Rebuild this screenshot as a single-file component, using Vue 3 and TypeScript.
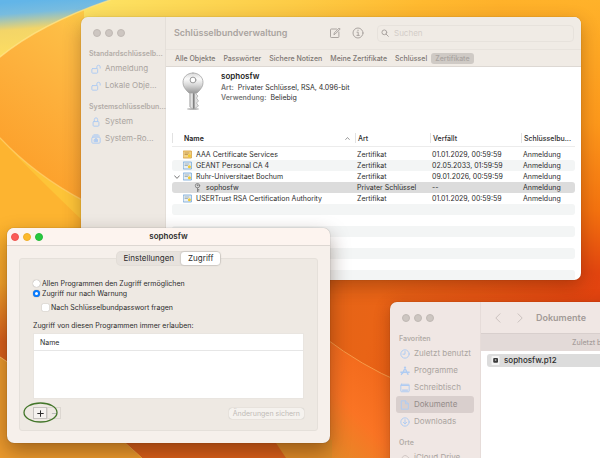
<script setup lang="ts">
interface Row { name: string; kind: string; expires: string; icon: 'root' | 'cert' | 'key'; open?: boolean; child?: boolean }

const categories = ['Alle Objekte', 'Passwörter', 'Sichere Notizen', 'Meine Zertifikate', 'Schlüssel', 'Zertifikate']
const rows: Row[] = [
  { name: 'AAA Certificate Services', kind: 'Zertifikat', expires: '01.01.2029, 00:59:59', icon: 'root' },
  { name: 'GEANT Personal CA 4', kind: 'Zertifikat', expires: '02.05.2033, 01:59:59', icon: 'cert' },
  { name: 'Ruhr-Universitaet Bochum', kind: 'Zertifikat', expires: '09.01.2026, 00:59:59', icon: 'cert', open: true },
  { name: 'sophosfw', kind: 'Privater Schlüssel', expires: '--', icon: 'key', child: true },
  { name: 'USERTrust RSA Certification Authority', kind: 'Zertifikat', expires: '01.01.2029, 00:59:59', icon: 'cert' },
]
const emptyRows = 7
const places = [
  { name: 'Zuletzt benutzt', icon: 'clock' },
  { name: 'Programme', icon: 'apps' },
  { name: 'Schreibtisch', icon: 'desk' },
  { name: 'Dokumente', icon: 'doc' },
  { name: 'Downloads', icon: 'down' },
]
</script>

<template>
  <main class="desktop">
    <svg class="wallpaper" viewBox="0 0 600 458" preserveAspectRatio="none" aria-hidden="true">
      <defs>
        <linearGradient id="base" x1="0.15" y1="0" x2="0.9" y2="0.7">
          <stop offset="0" stop-color="#fde364" /><stop offset=".25" stop-color="#fdcb45" /><stop offset=".4" stop-color="#ffb92f" /><stop offset=".75" stop-color="#fb9a1e" /><stop offset="1" stop-color="#f4720f" />
        </linearGradient>
        <linearGradient id="sky" x1="0.35" y1="0" x2="0.5" y2="1">
          <stop offset="0" stop-color="#62b5e8" /><stop offset=".2" stop-color="#78bcdf" /><stop offset=".48" stop-color="#f3d568" /><stop offset="1" stop-color="#ffdf60" />
        </linearGradient>
        <linearGradient id="petal" x1="0.9" y1="0" x2="0.5" y2="1">
          <stop offset="0" stop-color="#ffd448" /><stop offset=".25" stop-color="#fdbd45" /><stop offset=".55" stop-color="#fdb03c" /><stop offset="1" stop-color="#fc9f2a" />
        </linearGradient>
        <linearGradient id="low" x1="0" y1="0" x2="0" y2="1">
          <stop offset="0" stop-color="#fdb42e" /><stop offset=".25" stop-color="#f5a42a" /><stop offset=".5" stop-color="#d9601c" /><stop offset="1" stop-color="#d9601c" />
        </linearGradient>
        <linearGradient id="ember" x1="0" y1="0" x2="1" y2="0.1">
          <stop offset="0" stop-color="#d9641a" /><stop offset=".45" stop-color="#e96416" /><stop offset="1" stop-color="#e2430f" />
        </linearGradient>
        <linearGradient id="side" x1="0" y1="0" x2="0" y2="1">
          <stop offset="0" stop-color="#ffb22a" /><stop offset=".4" stop-color="#fd981b" /><stop offset=".68" stop-color="#f4720f" /><stop offset=".88" stop-color="#e2450f" />
        </linearGradient>
        <linearGradient id="flame" x1="0.6" y1="0.2" x2="0.1" y2="1">
          <stop offset="0" stop-color="#f26a1c" /><stop offset=".5" stop-color="#fa7424" /><stop offset="1" stop-color="#e58a28" />
        </linearGradient>
      </defs>
      <rect width="600" height="458" fill="url(#base)" />
      <path d="M0 0H110Q40 24 0 57Z" fill="url(#sky)" />
      <path d="M110 0Q40 24 0 57V138Q35 175 84 201V10Z" fill="url(#petal)" />
      <path d="M110 0Q40 24 0 57" fill="none" stroke="#ffe58a" stroke-width="1.5" opacity=".7" />
      <path d="M0 138Q35 175 84 201V230H0Z" fill="#fdc438" />
      <path d="M0 138Q35 175 84 201" fill="none" stroke="#ffcc66" stroke-width="1.5" opacity=".8" />
      <path d="M0 139Q40 180 84 222V280H0Z" fill="#fdb430" />
      <path d="M0 225H84V458H0Z" fill="url(#low)" />
      <path d="M500 0H600V310H500Z" fill="url(#side)" />
      <path d="M200 275H600V458H200Z" fill="url(#ember)" />
      <path d="M325 338Q362 366 400 382V458H325Z" fill="url(#flame)" />
      <path d="M325 338Q362 366 400 382" fill="none" stroke="#f79a48" />
      <path d="M0 357L130 446L140 458H0Z" fill="#eb9a2d" />
      <path d="M0 357L40 384" fill="none" stroke="#ffc066" />
      <path d="M122 440L142 458H290L272 430Z" fill="#d85f1a" />
      <path d="M274 440L286 458H332V440Z" fill="#dc8a28" />
      <path d="M122 440L142 458" fill="none" stroke="#eca448" />
    </svg>

    <section class="window keychain" aria-label="Schlüsselbundverwaltung">
      <aside class="side">
        <div class="lights"><i /><i /><i /></div>
        <h2>Standardschlüsselb...</h2>
        <a href="#">
          <svg viewBox="0 0 12 12"><rect x="1" y="5.5" width="7" height="5.5" rx="1" /><path d="M7 5.5V3.5a2 2 0 0 1 4 0V5" /></svg>Anmeldung
        </a>
        <a href="#">
          <svg viewBox="0 0 12 12"><rect x="1" y="5.5" width="7" height="5.5" rx="1" /><path d="M7 5.5V3.5a2 2 0 0 1 4 0V5" /></svg>Lokale Obje...
        </a>
        <h2 class="second">Systemschlüsselbun...</h2>
        <a href="#">
          <svg viewBox="0 0 12 12"><rect x="2.5" y="5.5" width="7" height="5.5" rx="1" /><path d="M4 5.5V3a2 2 0 0 1 4 0V5.5" /></svg>System
        </a>
        <a href="#">
          <svg viewBox="0 0 12 12"><rect x="1" y="3.8" width="10" height="7.2" rx="1.2" /><path d="M2 2.4h8M3.5 1h5" /><rect class="solid" x="4.2" y="6.8" width="3.6" height="2.4" /><path d="M4.9 6.5V5.8q1.1-1 2.2 0v.7" /></svg>System-Ro...
        </a>
      </aside>
      <div class="content">
        <header class="bar">
          <h1>Schlüsselbundverwaltung</h1>
          <button type="button" aria-label="Neu">
            <svg viewBox="0 0 12 12"><path d="M7.5 2H2.2Q1.5 2 1.5 2.7v7.1q0 .7.7.7h7q.7 0 .7-.7V5M5 7.3l.3-1.4L10.2 1l1 1-4.9 4.9z" /></svg>
          </button>
          <button type="button" aria-label="Information">
            <svg viewBox="0 0 12 12"><circle cx="6" cy="6" r="5" /><path d="M5 5.2h1.2v3M4.9 8.4h2.4M6 3.1v.6" /></svg>
          </button>
          <label class="search">
            <svg viewBox="0 0 12 12"><circle cx="5" cy="5" r="3.6" /><path d="M7.7 7.7l3.3 3.3" /></svg>
            <input type="search" placeholder="Suchen" aria-label="Suchen">
          </label>
        </header>
        <nav class="cats">
          <button v-for="c in categories" :key="c" type="button" :class="{ on: c === 'Zertifikate' }">{{ c }}</button>
        </nav>
        <div class="detail">
          <svg class="bigkey" viewBox="0 0 24 40" aria-hidden="true">
            <defs>
              <linearGradient id="metal" x1="0" y1="0" x2="0" y2="1"><stop offset="0" stop-color="#d8d8d8" /><stop offset=".3" stop-color="#fafafa" /><stop offset=".6" stop-color="#d8d8d8" /><stop offset="1" stop-color="#9a9a9a" /></linearGradient>
              <linearGradient id="stem" x1="0" y1="0" x2="1" y2="0"><stop offset="0" stop-color="#bbb" /><stop offset=".25" stop-color="#f2f2f2" /><stop offset=".45" stop-color="#666" /><stop offset=".6" stop-color="#ddd" /><stop offset="1" stop-color="#e6e6e6" /></linearGradient>
            </defs>
            <ellipse cx="12" cy="37" rx="6" ry="1" fill="#bbb" />
            <path d="M9 19h6v3l2 2-1.5 2 2 3-2 2 2 3-3 2-2.5 1L9 35Z" fill="url(#stem)" stroke="#999" stroke-width=".6" />
            <path d="M12 1c6 0 10 4.3 10 9.5 0 4-2 6-4 8.5l-2 2H8l-2-2C4 16.5 2 14.5 2 10.5 2 5.3 6 1 12 1Z" fill="url(#metal)" stroke="#a4a4a4" stroke-width=".8" />
            <circle cx="12" cy="8" r="2.9" fill="#fff" stroke="#999" />
          </svg>
          <div class="facts">
            <h3>sophosfw</h3>
            <p><b>Art:</b> Privater Schlüssel, RSA, 4.096-bit</p>
            <p><b>Verwendung:</b> Beliebig</p>
          </div>
        </div>
        <table class="certs">
          <colgroup><col><col class="c2"><col class="c3"><col class="c4"></colgroup>
          <thead>
            <tr>
              <th class="first"><div><span>Name</span><svg viewBox="0 0 6 6"><path d="M.8 4.2L3 1.8l2.2 2.4" /></svg></div></th>
              <th>Art</th><th>Verfällt</th><th>Schlüsselbu...</th>
            </tr>
          </thead>
          <tbody>
            <tr v-for="r in rows" :key="r.name" :class="{ sel: r.child }">
              <td>
                <span class="cell" :class="{ child: r.child }">
                  <svg class="twist" viewBox="0 0 6 6"><path v-if="r.open" d="M.6 1.8L3 4.4l2.4-2.6" /></svg>
                  <svg v-if="r.icon === 'key'" class="ic key" viewBox="0 0 9 9"><circle cx="4.5" cy="2.7" r="2.2" /><circle cx="4.5" cy="2.2" r=".4" /><path d="M4.5 4.9v3.7M4.8 6.5h1.1M4.8 7.9h1.1" /></svg>
                  <svg v-else class="ic" :class="r.icon" viewBox="0 0 9 9"><rect class="frame" x=".6" y="1" width="7.8" height="7" /><path d="M2 3h4M2 4.5h2.5" /><circle cx="6.4" cy="5.8" r="1.5" /></svg>
                  {{ r.name }}
                </span>
              </td>
              <td>{{ r.kind }}</td><td>{{ r.expires }}</td><td>Anmeldung</td>
            </tr>
            <tr v-for="n in emptyRows" :key="n"><td colspan="4" /></tr>
          </tbody>
        </table>
      </div>
    </section>

    <section class="window finder" aria-label="Dokumente">
      <aside class="side">
        <div class="lights"><i /><i /><i /></div>
        <h2>Favoriten</h2>
        <a v-for="p in places" :key="p.name" href="#" :class="{ on: p.icon === 'doc' }">
          <svg viewBox="0 0 12 12">
            <template v-if="p.icon === 'clock'"><circle cx="6" cy="6" r="5" /><path d="M6 3v3.2H3.5" /></template>
            <template v-else-if="p.icon === 'apps'"><path d="M6.6 1.5L3 8.8M5.4 1.5L9.6 10M1 7.5h10M2.3 9l-.6 1.2" class="thick" /></template>
            <template v-else-if="p.icon === 'desk'"><rect x="1" y="1.5" width="10" height="9" rx=".8" /><path d="M1.5 3h9" /><path d="M3 8.5h6" class="thick" /></template>
            <template v-else-if="p.icon === 'doc'"><path d="M2 1h4.5L10 4.5V11H2zM6.5 1v3.5H10" /></template>
            <template v-else><circle cx="6" cy="6" r="5" /><path d="M6 3.2v5M4 6.4l2 2 2-2" /></template>
          </svg>{{ p.name }}
        </a>
        <h2 class="second">Orte</h2>
        <a href="#" class="cloud"><svg viewBox="0 0 12 12"><path d="M3.2 10a2.3 2.3 0 0 1-.2-4.5 3.3 3.3 0 0 1 6.2-.6A2.6 2.6 0 0 1 9 10z" /></svg>iCloud Drive</a>
      </aside>
      <div class="content">
        <header class="bar">
          <button type="button" aria-label="Zurück"><svg viewBox="0 0 12 12"><path d="M8 1.8L3.8 6 8 10.2" /></svg></button>
          <button type="button" aria-label="Vorwärts"><svg viewBox="0 0 12 12"><path d="M4 1.8L8.2 6 4 10.2" /></svg></button>
          <h1>Dokumente</h1>
        </header>
        <div class="group">Zuletzt benutzt</div>
        <a href="#" class="file"><svg viewBox="0 0 9 9"><rect x=".5" y="0" width="8" height="9" rx="1" fill="#f4f4f4" /><rect x="2.2" y="2" width="4.8" height="4.8" rx="1" fill="#3a3a3a" /><circle cx="4.6" cy="4" r=".9" fill="#aaa" /></svg>sophosfw.p12</a>
      </div>
    </section>

    <section class="window dialog" aria-label="sophosfw">
      <header class="title"><div class="lights"><i class="r" /><i class="y" /><i class="g" /></div><h1>sophosfw</h1></header>
      <div class="body">
        <div class="tabs"><button type="button">Einstellungen</button><button type="button" class="on">Zugriff</button></div>
        <form class="panel" @submit.prevent>
          <label><input type="radio" name="access">Allen Programmen den Zugriff ermöglichen</label>
          <label><input type="radio" name="access" checked>Zugriff nur nach Warnung</label>
          <label class="sub"><input type="checkbox">Nach Schlüsselbundpasswort fragen</label>
          <p>Zugriff von diesen Programmen immer erlauben:</p>
          <div class="list"><div>Name</div></div>
          <div class="foot">
            <div class="pm">
              <button type="button" aria-label="Hinzufügen"><svg viewBox="0 0 8 8"><path d="M4 .8v6.4M.8 4h6.4" /></svg></button>
              <button type="button" aria-label="Entfernen" disabled><svg viewBox="0 0 8 8"><path d="M1.5 4h5" /></svg></button>
              <svg class="ring" viewBox="0 0 36 22" aria-hidden="true"><ellipse cx="17.5" cy="10.5" rx="16.5" ry="9.5" /></svg>
            </div>
            <button type="submit" class="save" disabled>Änderungen sichern</button>
          </div>
        </form>
      </div>
    </section>
  </main>
</template>

<style>
body { margin: 0; }
</style>

<style scoped>
.desktop { position: relative; min-height: 100vh; overflow: hidden; font: 7px/11px Inter, "Liberation Sans", sans-serif; color: #2c2c2c; }
.desktop * { box-sizing: border-box; }
.wallpaper { position: absolute; inset: 0; width: 100%; height: 100%; }
h1, h2, h3, p { margin: 0; }
button, input { font: inherit; color: inherit; border: 0; padding: 0; margin: 0; background: none; }
a { color: inherit; text-decoration: none; }
svg { fill: none; stroke: currentColor; stroke-linecap: round; stroke-linejoin: round; flex: none; display: block; }
.wallpaper, .bigkey { stroke: none; }
.window { position: absolute; display: flex; border-radius: 7px; overflow: hidden; white-space: nowrap; }
.lights { display: flex; gap: 4px; }
.lights i { width: 8px; height: 8px; border-radius: 50%; background: #cdc6c1; border: 1px solid #c0b9b4; }
.content { flex: 1; min-width: 0; background: #fff; }

.side { display: flex; flex-direction: column; color: #aaa4a0; font-size: 8px; flex: none; }
.side .lights { padding: 12px 0 0 12px; height: 31px; }
.side h2 { font-size: 7px; line-height: 12px; font-weight: 600; color: #b3ada8; }
.side .second { margin-top: 7px; }
.side a { display: flex; align-items: center; gap: 4px; height: 17px; border-radius: 3px; }
.side svg { width: 10px; height: 10px; color: #b0ccf2; stroke-width: 1.2; }
.side svg .solid { fill: currentColor; }
.side svg .thick { stroke-width: 1.6; }

.keychain { left: 81px; top: 17px; width: 500px; height: 263px; box-shadow: 0 6px 18px rgba(60, 20, 0, .3), 0 0 1px rgba(0, 0, 0, .4); }
.keychain .side { width: 85px; background: #eee9e3; border-right: 1px solid #e4dfd9; }
.keychain .side h2 { padding-left: 8px; }
.keychain .side a { padding-left: 10px; }
.bar { display: flex; align-items: center; }
.bar h1 { font-size: 9px; line-height: 14px; font-weight: 600; }
.keychain .bar { height: 32px; padding: 0 7px 0 8px; background: #f0ebe5; color: #aaa4a0; }
.keychain .bar h1 { flex: 1; }
.keychain .bar button { margin-right: 11px; }
.keychain .bar button:last-of-type { margin-right: 13px; }
.keychain .bar button svg { width: 12px; height: 12px; }
.search { display: flex; align-items: center; gap: 5px; width: 197px; height: 17px; padding: 0 3px; border: 1px solid #e7e2dc; border-radius: 4px; }
.search svg { width: 8px; height: 8px; stroke-width: 1.5; }
.search input { flex: 1; min-width: 0; font-size: 8px; outline: 0; }
.search input::placeholder { color: #d3cdc8; opacity: 1; }
.cats { display: flex; align-items: center; height: 18px; padding-left: 5px; background: #f0ebe5; border-top: 1px solid #e8e3dd; border-bottom: 1px solid #ddd8d3; color: #7d7773; font-weight: 500; }
.cats button { height: 11px; padding: 0 4px; border-radius: 3px; }
.cats .on { background: #cfcac5; color: #aaa5a1; }
.detail { display: flex; gap: 16px; height: 63px; padding: 3px 15px; }
.bigkey { width: 24px; height: 40px; margin-top: 2px; }
.facts h3 { font-size: 8px; line-height: 13px; font-weight: 600; color: #1c1c1c; }
.facts p { line-height: 10px; }
.facts b { font-weight: 600; color: #777; margin-right: 2px; }
.certs { width: calc(100% - 12px); margin-left: 6px; table-layout: fixed; border-collapse: separate; border-spacing: 0; }
.certs th, .certs td { padding: 0; height: 11px; text-align: left; font-weight: 400; }
.c2 { width: 75px; }
.c3 { width: 91px; }
.c4 { width: 54px; }
.certs th { height: 17px; font-weight: 500; padding-left: 3px; border-bottom: 1px solid #ececec; background: linear-gradient(#e2e2e2, #e2e2e2) 0 3px / 1px 10px no-repeat; }
.certs th.first { padding: 0 5px 0 12px; font-weight: 600; color: #1c1c1c; }
.first div { display: flex; align-items: center; justify-content: space-between; }
.certs th svg { width: 5px; height: 5px; color: #888; }
.certs td { padding-left: 2px; }
.certs td:first-child { border-radius: 3px 0 0 3px; }
.certs td:last-child { border-radius: 0 3px 3px 0; }
.certs td:only-child { border-radius: 3px; }
.certs tbody::before { content: ""; display: block; height: 2px; }
.certs tbody tr:nth-child(even) td { background: #f3f5f5; }
.certs tbody tr.sel td { background: #dcdcdc; }
.cell { display: flex; align-items: center; gap: 3px; }
.cell.child { padding-left: 10px; }
.twist { width: 6px; height: 6px; color: #777; }
.ic { width: 9px; height: 9px; stroke-width: .8; margin-right: 1px; }
.ic.cert .frame { fill: #e9eff2; stroke: #6ca3d8; }
.ic.root .frame { fill: #f3d489; stroke: #d39a35; }
.ic path { stroke: #90a4ae; }
.ic.root path { stroke: #b98e49; }
.ic circle { fill: #f2ca2f; stroke: none; }
.ic.key circle, .ic.key path { fill: none; stroke: #777; }

.finder { left: 390px; top: 302px; right: -60px; height: 200px; box-shadow: 0 4px 16px rgba(60, 20, 0, .3), 0 0 1px rgba(0, 0, 0, .4); }
.finder .side { width: 91px; padding: 0 6px; background: #f0e7e4; border-right: 1px solid #e6dcd9; }
.finder .side .lights { padding-left: 6px; }
.finder .side h2 { padding-left: 3px; }
.finder .side a { padding-left: 4px; }
.finder .side a.on { background: #d9cfcd; color: #948b89; }
.finder .side a.cloud svg { color: #cfc6c3; }
.finder .bar { height: 31px; gap: 10px; padding-left: 11px; background: #f0e7e4; color: #a29a97; }
.finder .bar svg { width: 12px; height: 12px; color: #cbc2bf; }
.group { height: 18px; line-height: 17px; background: #e3dad8; border-top: 1px solid #d8cfcd; color: #a79e9c; padding-left: 91px; font-weight: 500; }
.file { display: flex; align-items: center; gap: 4px; height: 13px; margin: 3px 6px; padding-left: 4px; border-radius: 3px; background: #dcdcdc; font-size: 8px; font-weight: 500; }
.file svg { width: 9px; height: 9px; stroke: none; }

.dialog { left: 7px; top: 228px; width: 323px; flex-direction: column; background: #f6f0eb; box-shadow: 0 8px 20px rgba(50, 20, 0, .4), 0 0 1px rgba(0, 0, 0, .5); }
.title { display: grid; grid-template-columns: 1fr auto 1fr; align-items: center; height: 18px; padding: 0 4px; background: #fdf4ef; border-bottom: 1px solid #ddd7d2; }
.title h1 { font-size: 8px; font-weight: 600; }
.title .r { background: #fc5b56; border-color: #ec5550; }
.title .y { background: #fdb92c; border-color: #eeae2a; }
.title .g { background: #27c840; border-color: #25ba3b; }
.body { display: flex; flex-direction: column; padding: 6px 12px 12px; }
.tabs { display: flex; align-self: center; z-index: 1; margin-bottom: -7px; border-radius: 4px; background: #e7e2dd; box-shadow: 0 0 0 1px #e2ddd7; font-size: 8px; }
.tabs button { height: 13px; padding: 0 7px; border-radius: 3px; }
.tabs .on { background: #fff; box-shadow: 0 0 2px rgba(0, 0, 0, .3); }
.panel { padding: 19px 13px 11px; border: 1px solid #e5e0da; border-radius: 3px; background: #eee9e3; }
.panel label { display: flex; align-items: center; gap: 2px; height: 10px; }
.panel .sub { margin: 4px 0 8px 9px; }
.panel input { appearance: none; width: 7px; height: 7px; background: #fff; box-shadow: 0 0 1px rgba(0, 0, 0, .5); }
.panel input[type="radio"] { border-radius: 50%; }
.panel input[type="radio"]:checked { border: 2px solid #087bff; }
.panel input[type="checkbox"] { border-radius: 1px; }
.list { height: 66px; margin-top: 2px; border: 1px solid #e9e5e0; background: #fff; }
.list div { height: 17px; line-height: 17px; padding-left: 6px; border-bottom: 1px solid #e6e6e6; }
.foot { display: flex; align-items: center; justify-content: space-between; margin-top: 8px; }
.pm { position: relative; display: flex; }
.pm button { display: grid; place-items: center; width: 14px; height: 12px; border: 1px solid #dcd7d1; }
.pm button:first-child { border-color: #c6c3bf; background: #f5f2ef; }
.pm button svg { width: 7px; height: 7px; stroke-width: 1.2; }
.pm button:disabled svg { color: #bbb; }
.ring { position: absolute; left: -10px; top: -5px; width: 36px; height: 22px; stroke: #43762a; stroke-width: 1.3; }
.save { height: 11px; padding: 0 4px; border-radius: 3px; background: #f5f2ee; box-shadow: 0 0 1px rgba(0, 0, 0, .3); color: #c0bbb6; }
</style>
